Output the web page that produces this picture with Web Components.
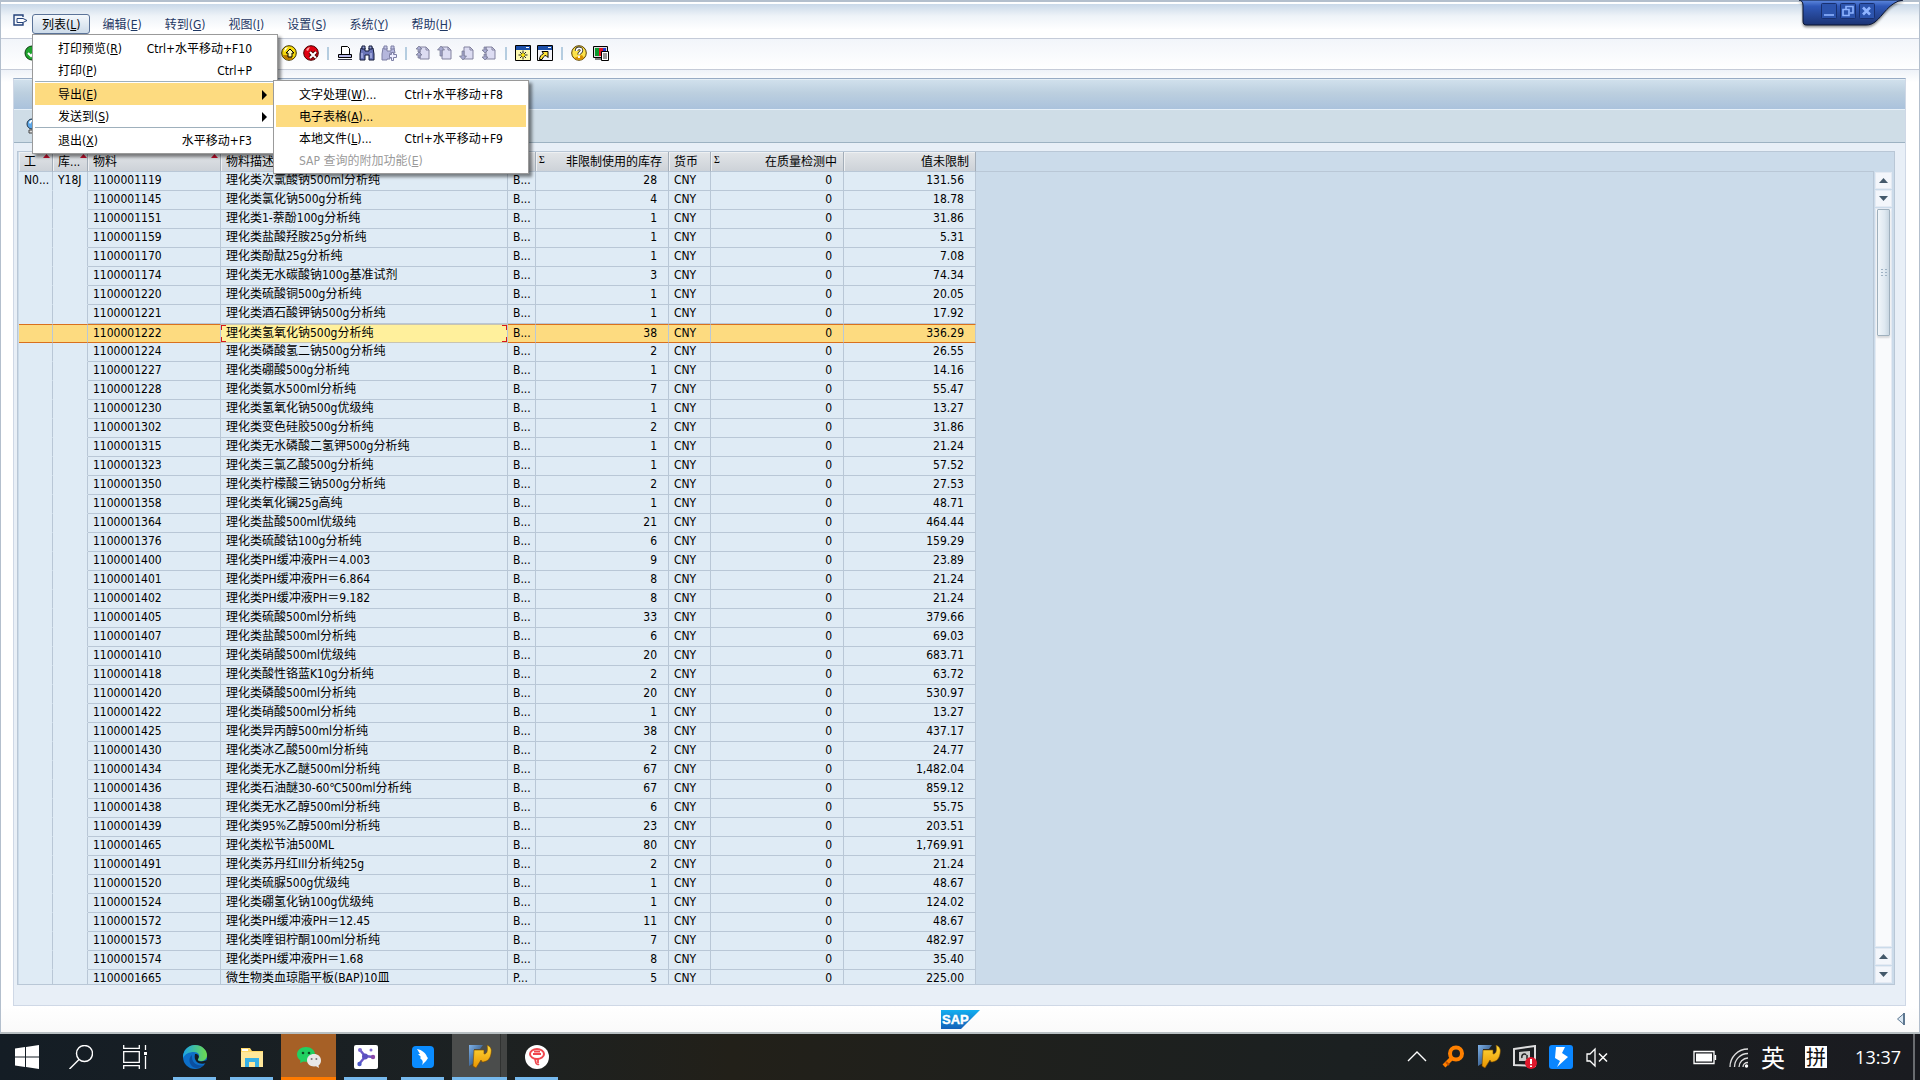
<!DOCTYPE html>
<html lang="zh-CN">
<head>
<meta charset="utf-8">
<title>SAP</title>
<style>
  :root {
    --ui-font: "DejaVu Sans Condensed", "Noto Sans", "Noto Sans CJK SC", sans-serif;
    --line: #b9c7d6;
    --select: #fddb80;
    --navy: #1f3864;
  }
  body {
    margin: 0;
    height: 100vh;
    display: flex;
    flex-direction: column;
    overflow: hidden;
    font: 12px/18px var(--ui-font);
    color: #000;
  }
  sap-window { flex: 1; min-height: 0; }
</style>
</head>
<body>
  <sap-window>
    <sap-menubar slot="menu">
      <menu-title open>列表(<u>L</u>)
        <menu-popup slot="popup">
          <menu-item keys="Ctrl+水平移动+F10">打印预览(<u>R</u>)</menu-item>
          <menu-item keys="Ctrl+P">打印(<u>P</u>)</menu-item>
          <menu-line></menu-line>
          <menu-item active more>导出(<u>E</u>)
            <menu-popup slot="sub">
              <menu-item keys="Ctrl+水平移动+F8">文字处理(<u>W</u>)...</menu-item>
              <menu-item active>电子表格(<u>A</u>)...</menu-item>
              <menu-item keys="Ctrl+水平移动+F9">本地文件(<u>L</u>)...</menu-item>
              <menu-item disabled>SAP 查询的附加功能(<u>E</u>)</menu-item>
            </menu-popup>
          </menu-item>
          <menu-item more>发送到(<u>S</u>)</menu-item>
          <menu-line></menu-line>
          <menu-item keys="水平移动+F3">退出(<u>X</u>)</menu-item>
        </menu-popup>
      </menu-title>
      <menu-title>编辑(<u>E</u>)</menu-title>
      <menu-title>转到(<u>G</u>)</menu-title>
      <menu-title>视图(<u>I</u>)</menu-title>
      <menu-title>设置(<u>S</u>)</menu-title>
      <menu-title>系统(<u>Y</u>)</menu-title>
      <menu-title>帮助(<u>H</u>)</menu-title>
    </sap-menubar>
    <sap-toolbar slot="toolbar"></sap-toolbar>
    <alv-grid></alv-grid>
    <sap-status slot="status"></sap-status>
  </sap-window>
  <win-taskbar></win-taskbar>

<script>
const page = (extra) => `<path d="M5 2h6l3 3v9H5z" fill="#dcdcf2" stroke="#82829f"/><path d="M11 2v3h3" fill="none" stroke="#82829f"/>${extra}`;

// 16px toolbar glyphs
const TOOL_ICONS = {
  enter: `<circle cx="8" cy="8" r="7" fill="#1fa32e" stroke="#0b3d10"/><path d="M4 8l3 3 5-6" fill="none" stroke="#fff" stroke-width="2"/>`,
  up: `<circle cx="8" cy="8" r="7.3" fill="#f5d90a" stroke="#3c3000"/><path d="M2 10a6.500 6.500 0 0 0 10 4l-3-4z" fill="#b97a00"/><path d="M4 3l3-1-4 5z" fill="#fff"/><path d="M9 4l4 4h-2v4H7V8H5z" fill="#fff7a8" stroke="#000"/>`,
  cancel: `<circle cx="8" cy="8" r="7.3" fill="#e00010" stroke="#400"/><path d="M3 5a5 5 0 0 1 4-3L5 6z" fill="#ff9d9d"/><path d="M7 7l6 6M13 7l-6 6" stroke="#500" stroke-width="4"/><path d="M7 7l6 6M13 7l-6 6" stroke="#fff" stroke-width="2"/>`,
  print: `<path d="M4.500 1.500h6l2 2v6h-8z" fill="#fff" stroke="#000"/><path d="M1.500 9.500h13v3h-13z" fill="#b8b8e8" stroke="#000"/><path d="M1 14.500h14" stroke="#334" stroke-width="1"/>`,
  find: `<path d="M2 3h4v3h4V3h4l1 6v6h-5v-5H6v5H1V9z" fill="#6a74b8" stroke="#101838"/><path d="M3 1h3v3H3zM10 1h3v3h-3z" fill="#9aa4dc" stroke="#101838"/><path d="M3 8v5M12 8v5" stroke="#c8d0f8"/>`,
  next: `<path d="M2 3h4v3h4V3h3l1 5H9v6H6v1H1V9z" fill="#b4b6dc" stroke="#7c7ea4"/><path d="M3 1h3v3H3zM10 1h3v3h-3z" fill="#c8caea" stroke="#7c7ea4"/><path d="M10.500 7.500h2v2h3v3h-3v3h-2v-3h-2v-3h2z" fill="#eef" stroke="#7c7ea4"/>`,
  first: page(`<path d="M4 1l3 3H5v3H3V4H1zM4 7l3 3H5v3H3v-3H1z" fill="#a8aad0" stroke="#70728c" stroke-width=".7"/>`),
  prev: page(`<path d="M4 1l3.500 4H5v6H3V5H.5z" fill="#a8aad0" stroke="#70728c" stroke-width=".7"/>`),
  pgdn: page(`<path d="M4 15l3.500-4H5V6H3v5H.5z" fill="#a8aad0" stroke="#70728c" stroke-width=".7"/>`),
  last: page(`<path d="M4 8L1 5h2V2h2v3h2zM4 15l-3-3h2V9h2v3h2z" fill="#a8aad0" stroke="#70728c" stroke-width=".7"/>`),
  session: `<path d="M.5 .5h15v15H.5z" fill="#fdf9b0" stroke="#000"/><path d="M1 1h14v4H1z" fill="#1c4fa8"/><path d="M11 2h3v1h-3z" fill="#fff"/><path d="M8 5.500v9M3.500 10h9M5 7l6 6M11 7l-6 6" stroke="#222"/><circle cx="8" cy="10" r="1.800" fill="#ffe800"/>`,
  shortcut: `<path d="M.5 .5h15v15H.5z" fill="#f4f4fa" stroke="#000"/><path d="M1 1h14v4H1z" fill="#1c4fa8"/><path d="M11 2h3v1h-3z" fill="#fff"/><path d="M5 6.500h6v6l-2-2c-2 0-3 2-4 4H2.500c0-3 2-5 4-6z" fill="#ffe23a" stroke="#000"/>`,
  help: `<circle cx="8" cy="8" r="7.300" fill="#fce24a" stroke="#5a4000"/><path d="M3 13a7 7 0 0 0 10 0l-2-3z" fill="#d89000"/><path d="M5.500 6c0-3.500 5-3.500 5-.5 0 2-2.500 2-2.500 4" fill="none" stroke="#222" stroke-width="3.400"/><path d="M5.500 6c0-3.500 5-3.500 5-.5 0 2-2.500 2-2.500 4M8 11v2" fill="none" stroke="#fff" stroke-width="1.800"/>`,
  layout: `<path d="M.5 1.500h14v11H.5z" fill="#ddd" stroke="#000"/><path d="M2 3h4v8H2z" fill="#0a9a2c"/><path d="M6 3h4v8H6z" fill="#e01020"/><path d="M10 3h3v8h-3z" fill="#2038d0"/><path d="M2 14h7" stroke="#000"/><path d="M8.500 6.500h7v9h-7z" fill="#fff" stroke="#000"/><path d="M10 9h4M10 11h4M10 13h4" stroke="#333"/>`
};

const SAP_GUI = `<defs><linearGradient id="g" x1="0" y1="0" x2="1" y2="1"><stop offset="0" stop-color="#7fb2e8"/><stop offset="1" stop-color="#0d2c56"/></linearGradient><linearGradient id="y" x1="0" y1="0" x2="0" y2="1"><stop offset="0" stop-color="#ffd93a"/><stop offset="1" stop-color="#e99400"/></linearGradient></defs>
  <path d="M1 0h14l-3 4H6v14l-5 3z" fill="url(#g)"/><path d="M6 5h10v4c3 0 4-3 3-9 4 2 5 4 4 9-1 6-5 8-9 8l-1-2-5 8-3-2z" fill="url(#y)" stroke="#7a4a00" stroke-width=".6"/>`;

// 24px taskbar and tray glyphs
const TASK_ICONS = {
  start: `<path d="M0 3.400l10-1.400v9.500H0zM11 1.900L24 0v11.500H11zM0 12.500h10V22L0 20.600zM11 12.500h13V24L11 22.100z" fill="#fff"/>`,
  search: `<circle cx="15.500" cy="8.500" r="8" fill="none" stroke="#fff" stroke-width="1.400"/><path d="M10 14.500L.5 24" stroke="#fff" stroke-width="1.400"/>`,
  view: `<path d="M.7 0v3.300h15.600V0M.7 24v-3.300h15.600V24M.7 6.700h15.600v10.600H.7zM22.500 0v5M22.500 11v13" fill="none" stroke="#fff" stroke-width="1.300"/><path d="M21 7h3v3h-3z" fill="#fff"/>`,
  edge: `<defs><linearGradient id="a" x1="0" y1="0" x2="1" y2="0"><stop offset="0" stop-color="#1aa5e8"/><stop offset="1" stop-color="#6edb4c"/></linearGradient></defs><circle cx="12" cy="12" r="12" fill="#0d6fc8"/><path d="M0 11C1 4 6 0 12 0c7 0 12 5 12 10 0 4-3 6-6 6-2 0-4-1-3-2 3-4 0-7-4-7C6 7 2 9 0 13z" fill="url(#a)"/><path d="M9 10c-4 3-3 9 1 12 3 2 8 1 11-2-6 2-13-2-12-10z" fill="#0b4fa0"/><path d="M12 9c3 0 5 2 3 5-1 2 2 3 6 2l3-1-1 3c-5 2-13 0-11-9z" fill="#151c20"/>`,
  folder: `<path d="M1 3h9l2 3h11v16H1z" fill="#ffd868"/><path d="M1 7h22v15H1z" fill="#ffe79a"/><path d="M2 4h6v2H2z" fill="#fff"/><path d="M5 22v-9h14v9h-4v-5H9v5z" fill="#38b1e6"/>`,
  wechat: `<path d="M9 2C4 2 0 5 0 9.500c0 2.500 1.500 4.500 3.500 6L3 18l3.500-1.500c1 .3 1.500.3 2.500.3 5 0 9-3 9-7.300S14 2 9 2z" fill="#20d061"/><circle cx="6" cy="8" r="1.300" fill="#0b4a22"/><circle cx="12" cy="8" r="1.300" fill="#0b4a22"/><path d="M17 9c-4 0-7 2.600-7 6.300s3 6.200 7 6.200l2-.2 3 1.700-.5-2.500c1.700-1.200 2.500-3 2.500-5C24 11.600 21 9 17 9z" fill="#e8e8e8"/><circle cx="14.600" cy="14" r="1" fill="#777"/><circle cx="19.400" cy="14" r="1" fill="#777"/>`,
  graph: `<rect width="24" height="24" rx="2" fill="#fff"/><path d="M6 5l5 6 8 1M11 12l-6 7" fill="none" stroke="#6a58c8" stroke-width="2.400"/><circle cx="11" cy="11.500" r="3" fill="#5a50c0"/><circle cx="6" cy="5" r="2" fill="#7a68d0"/><circle cx="19" cy="12" r="2.200" fill="#8a4aa8"/><circle cx="5.500" cy="19" r="2.200" fill="#4a58c8"/><circle cx="17" cy="5" r="1.500" fill="#7a68d0"/>`,
  bird: `<rect x="1" y="1" width="22" height="22" rx="4" fill="#0a8cff"/><path d="M6 4c5 1 9 4 10 8l1 1-2 3-4 4c1-2 1-4 0-5l-2-2 1-1-3-3 2 0z" fill="#fff"/>`,
  sap: SAP_GUI,
  red: `<circle cx="12" cy="12" r="12" fill="#fff"/><ellipse cx="12" cy="9" rx="7" ry="5" fill="none" stroke="#f0484e" stroke-width="2"/><path d="M8 9h8M10 14l1 4a2 2 0 0 0 3 1M13 13v5M9 6.500h6" fill="none" stroke="#f0484e" stroke-width="1.800"/>`,
  chevron: `<path d="M3 16l9-9 9 9" fill="none" stroke="#fff" stroke-width="1.400"/>`,
  key: `<circle cx="15" cy="8.500" r="6" fill="none" stroke="#ff8000" stroke-width="4"/><path d="M11 13l-8 8" stroke="#ff8000" stroke-width="4"/><path d="M5 17l3 3" stroke="#c05000" stroke-width="2"/>`,
  cam: `<path d="M1 4l21-3v20L1 20z" fill="none" stroke="#ddd" stroke-width="2"/><path d="M6 16V7l11-1v10z" fill="#ccc"/><path d="M9 13c-1-4 3-5 4-3M14 10v4" stroke="#222" stroke-width="1.500" fill="none"/><circle cx="18" cy="18" r="6" fill="#e0182c"/><path d="M18 14v5M18 20.500v1.500" stroke="#fff" stroke-width="2"/>`,
  bolt: `<rect width="24" height="24" rx="3" fill="#0a86ff"/><path d="M7 2l9 0-3 6 6 4L8 22l3-6-5-3z" fill="#fff"/>`,
  mute: `<path d="M2 9h3l5-5v17l-5-5H2z" fill="none" stroke="#fff" stroke-width="1.300"/><path d="M14 8.500l8 8M22 8.500l-8 8" stroke="#fff" stroke-width="1.500"/>`,
  battery: `<path d="M1 6.500h20v12H1zM22.500 10v5" fill="none" stroke="#fff" stroke-width="1.300"/><path d="M3 8.500h16v8H3z" fill="#fff"/>`,
  wifi: `<path d="M3 22C3 12 11 4 21 4M7.500 22C7.500 15 13 8.500 21 8.500M12 22c0-4.500 4-9 9-9M16 22c0-2.500 2-4.500 5-4.500" fill="none" stroke="#ddd" stroke-width="1.300"/><circle cx="19.500" cy="21" r="1.700" fill="#fff"/>`
};

const svg = (body, size, box = size) =>
  `<svg width="${size}" height="${size}" viewBox="0 0 ${box} ${box}" aria-hidden="true">${body}</svg>`;

class BaseElement extends HTMLElement {
  constructor() {
    super();
    this.attachShadow({ mode: "open" });
  }

  connectedCallback() {
    this.shadowRoot.innerHTML = this.render();
  }
}

class SapWindow extends BaseElement {
  render() {
    return `
      <style>
        :host {
          display: flex;
          flex-direction: column;
          border: 1px solid #b3bfcd;
          border-top-width: 2px;
          border-bottom: 2px solid #b8bfc2;
          background: #fff;
          box-sizing: border-box;
        }
        main {
          flex: 1;
          min-height: 0;
          display: flex;
          flex-direction: column;
          padding: 8px 13px 0 12px;
          background: linear-gradient(#eef2f8, #fff 12px);
        }
        .screen {
          flex: 1;
          min-height: 0;
          display: flex;
          flex-direction: column;
          background: #e8eff7;
          border: 1px solid #cfd8e6;
          border-top-color: #97abc4;
        }
        .title {
          height: 29px;
          border-top: 1px solid #e4eef6;
          border-bottom: 1px solid #e6f0f8;
          background: linear-gradient(#d0e0ec, #bccfdf 45%, #aac2dc);
        }
        .app-bar {
          height: 32px;
          display: flex;
          align-items: center;
          padding-left: 10px;
          background: #cfdde7;
          border-bottom: 1px solid #9db2c2;
        }
        button {
          display: flex;
          padding: 0;
          border: 0;
          background: none;
        }
        .body {
          flex: 1;
          min-height: 0;
          display: flex;
          padding: 8px 10px 20px 3px;
        }
        ::slotted(alv-grid) { flex: 1; min-width: 0; }
      </style>
      <slot name="menu"></slot>
      <slot name="toolbar"></slot>
      <main>
        <div class="screen">
          <div class="title"></div>
          <div class="app-bar">
            <button aria-label="明细">${svg(`<circle cx="8" cy="6" r="5" fill="#5aa6e8" stroke="#234"/><path d="M5 4l2-2h2L6 6z" fill="#fff"/><path d="M5 12h6v3H5z" fill="#ddd" stroke="#444"/>`, 16)}</button>
          </div>
          <div class="body"><slot></slot></div>
        </div>
      </main>
      <slot name="status"></slot>`;
  }
}

class SapMenubar extends BaseElement {
  render() {
    return `
      <style>
        :host {
          position: relative;
          z-index: 5;
          display: flex;
          align-items: flex-start;
          gap: 1px;
          height: 24px;
          padding: 12px 0 0 12px;
          border-bottom: 1px solid #c5cbd8;
          background: linear-gradient(#fff 2px, #c9d8e8 2px, #eef3f8 14px, #fff 28px);
          color: var(--navy);
        }
        .system {
          display: flex;
          width: 18px;
          padding: 0;
          border: 0;
          background: none;
        }
        /* window controls hang over the corner of the menu bar */
        .controls {
          position: absolute;
          top: -2px;
          right: 16px;
          display: block;
          filter: drop-shadow(0 2px 1px #0006);
        }
      </style>
      <button class="system" aria-label="系统菜单">${svg(`<path d="M10 3V1H1v10h9V9" fill="none" stroke="#24427a" stroke-width="1.400"/><path d="M4 4.500h6l4 2-4 2H4z" fill="#fff" stroke="#24427a"/>`, 16)}</button>
      <slot></slot>
      <svg class="controls" width="104" height="28" viewBox="0 0 104 28" role="img" aria-label="窗口控制">
        <defs><linearGradient id="b" x1="0" y1="0" x2="0" y2="1"><stop offset="0" stop-color="#5f8ae0"/><stop offset=".25" stop-color="#2f58b8"/><stop offset="1" stop-color="#1c3474"/></linearGradient></defs>
        <path d="M0 0h104C90 2 84 16 76 22c-3 2-5 3-9 3H8c-3 0-4-1-4-4V5C4 2 2 0 0 0z" fill="url(#b)" stroke="#0a1430"/>
        <g fill="#2c54ae" stroke="#183070"><rect x="22.500" y="3.500" width="15" height="15" rx="1"/><rect x="41.500" y="3.500" width="15" height="15" rx="1"/><rect x="60.500" y="3.500" width="15" height="15" rx="1"/></g>
        <g fill="none" stroke="#8fb4ff" stroke-width="1.600"><path d="M25 15h10"/><path d="M44 9.500h6v6h-6zM47 9V6.500h7V13h-3"/><path d="M64 7.500l7 7M71 7.500l-7 7" stroke-width="2.600"/></g>
      </svg>`;
  }
}

class MenuTitle extends BaseElement {
  render() {
    return `
      <style>
        :host { position: relative; display: block; }
        button {
          height: 20px;
          padding: 1px 10px 0;
          border: 1px solid transparent;
          border-radius: 3px;
          background: none;
          font: inherit;
          color: inherit;
          white-space: nowrap;
        }
        :host([open]) button {
          padding: 1px 9px 0;
          border-color: #5b7398;
          background: linear-gradient(#f4f8fc, #cddbe9);
          color: #000;
        }
        ::slotted(menu-popup) {
          position: absolute;
          top: 100%;
          left: 0;
          width: 240px;
        }
      </style>
      <button aria-haspopup="menu"><slot></slot></button>
      <slot name="popup"></slot>`;
  }
}

class MenuPopup extends BaseElement {
  render() {
    return `
      <style>
        :host {
          z-index: 10;
          display: block;
          padding: 2px;
          border: 1px solid #9a9a9a;
          background: #fff;
          color: #000;
          box-shadow: 3px 3px 3px #0007;
        }
      </style>
      <slot></slot>`;
  }
}

class MenuItem extends BaseElement {
  render() {
    const keys = this.getAttribute("keys") || "";
    const arrow = this.hasAttribute("more")
      ? `<svg class="arrow" width="5" height="10" viewBox="0 0 5 10"><path d="M0 0l5 5-5 5z"/></svg>` : "";
    return `
      <style>
        :host { position: relative; display: block; }
        button {
          display: flex;
          align-items: center;
          justify-content: space-between;
          width: 100%;
          height: 22px;
          padding: 2px 23px 0;
          border: 0;
          background: none;
          font: inherit;
          color: inherit;
          white-space: nowrap;
        }
        :host([more]) button { padding-right: 8px; }
        :host([active]) > button, button:hover { background: var(--select); }
        button:disabled { color: #9a9a9a; background: none; }
        ::slotted(menu-popup) {
          position: absolute;
          top: -3px;
          left: calc(100% - 2px);
          width: 250px;
        }
      </style>
      <button role="menuitem"${this.hasAttribute("disabled") ? " disabled" : ""}>
        <span><slot></slot></span><span>${keys}</span>${arrow}
      </button>
      <slot name="sub"></slot>`;
  }
}

class MenuLine extends BaseElement {
  render() {
    return `<style>:host { display: block; height: 1px; margin-bottom: 1px; background: #9fb0bc; }</style>`;
  }
}

class SapToolbar extends BaseElement {
  render() {
    const groups = [
      [["up", "退出"], ["cancel", "取消"]],
      [["print", "打印"], ["find", "查找"], ["next", "继续查找"]],
      [["first", "第一页"], ["prev", "上一页"], ["pgdn", "下一页"], ["last", "最后一页"]],
      [["session", "新建会话"], ["shortcut", "生成快捷方式"]],
      [["help", "帮助"], ["layout", "自定义布局"]]
    ];
    const button = ([icon, label]) => `<button aria-label="${label}">${svg(TOOL_ICONS[icon], 16)}</button>`;
    return `
      <style>
        :host {
          display: flex;
          align-items: center;
          gap: 6px;
          height: 28px;
          padding: 0 0 2px 23px;
          border-bottom: 1px solid #c5cbd8;
          background: linear-gradient(#f2f5fa, #fff);
        }
        button { display: flex; padding: 0; border: 0; background: none; }
        input { width: 229px; height: 20px; box-sizing: border-box; border: 1px solid #a4b4c8; }
        i { width: 2px; height: 13px; margin: 0 2px; background: #b5cde0; }
      </style>
      ${button(["enter", "回车"])}
      <input type="text" aria-label="命令">
      ${groups.map((g) => g.map(button).join("")).join("<i></i>")}`;
  }
}

// 物料, 物料描述, 库存, 金额
const ROWS = [
  ["1100001119", "理化类次氯酸钠500ml分析纯", "28", "131.56"],
  ["1100001145", "理化类氯化钠500g分析纯", "4", "18.78"],
  ["1100001151", "理化类1-萘酚100g分析纯", "1", "31.86"],
  ["1100001159", "理化类盐酸羟胺25g分析纯", "1", "5.31"],
  ["1100001170", "理化类酚酞25g分析纯", "1", "7.08"],
  ["1100001174", "理化类无水碳酸钠100g基准试剂", "3", "74.34"],
  ["1100001220", "理化类硫酸铜500g分析纯", "1", "20.05"],
  ["1100001221", "理化类酒石酸钾钠500g分析纯", "1", "17.92"],
  ["1100001222", "理化类氢氧化钠500g分析纯", "38", "336.29"],
  ["1100001224", "理化类磷酸氢二钠500g分析纯", "2", "26.55"],
  ["1100001227", "理化类硼酸500g分析纯", "1", "14.16"],
  ["1100001228", "理化类氨水500ml分析纯", "7", "55.47"],
  ["1100001230", "理化类氢氧化钠500g优级纯", "1", "13.27"],
  ["1100001302", "理化类变色硅胶500g分析纯", "2", "31.86"],
  ["1100001315", "理化类无水磷酸二氢钾500g分析纯", "1", "21.24"],
  ["1100001323", "理化类三氯乙酸500g分析纯", "1", "57.52"],
  ["1100001350", "理化类柠檬酸三钠500g分析纯", "2", "27.53"],
  ["1100001358", "理化类氧化镧25g高纯", "1", "48.71"],
  ["1100001364", "理化类盐酸500ml优级纯", "21", "464.44"],
  ["1100001376", "理化类硫酸钴100g分析纯", "6", "159.29"],
  ["1100001400", "理化类PH缓冲液PH＝4.003", "9", "23.89"],
  ["1100001401", "理化类PH缓冲液PH＝6.864", "8", "21.24"],
  ["1100001402", "理化类PH缓冲液PH＝9.182", "8", "21.24"],
  ["1100001405", "理化类硫酸500ml分析纯", "33", "379.66"],
  ["1100001407", "理化类盐酸500ml分析纯", "6", "69.03"],
  ["1100001410", "理化类硝酸500ml优级纯", "20", "683.71"],
  ["1100001418", "理化类酸性铬蓝K10g分析纯", "2", "63.72"],
  ["1100001420", "理化类磷酸500ml分析纯", "20", "530.97"],
  ["1100001422", "理化类硝酸500ml分析纯", "1", "13.27"],
  ["1100001425", "理化类异丙醇500ml分析纯", "38", "437.17"],
  ["1100001430", "理化类冰乙酸500ml分析纯", "2", "24.77"],
  ["1100001434", "理化类无水乙醚500ml分析纯", "67", "1,482.04"],
  ["1100001436", "理化类石油醚30-60℃500ml分析纯", "67", "859.12"],
  ["1100001438", "理化类无水乙醇500ml分析纯", "6", "55.75"],
  ["1100001439", "理化类95%乙醇500ml分析纯", "23", "203.51"],
  ["1100001465", "理化类松节油500ML", "80", "1,769.91"],
  ["1100001491", "理化类苏丹红III分析纯25g", "2", "21.24"],
  ["1100001520", "理化类硫脲500g优级纯", "1", "48.67"],
  ["1100001524", "理化类硼氢化钠100g优级纯", "1", "124.02"],
  ["1100001572", "理化类PH缓冲液PH＝12.45", "11", "48.67"],
  ["1100001573", "理化类喹钼柠酮100ml分析纯", "7", "482.97"],
  ["1100001574", "理化类PH缓冲液PH＝1.68", "8", "35.40"],
  ["1100001665", "微生物类血琼脂平板(BAP)10皿", "5", "225.00", "P..."]
];

class AlvGrid extends BaseElement {
  connectedCallback() {
    super.connectedCallback();
    this.shadowRoot.querySelector("tbody").addEventListener("click", (e) => {
      const row = e.target.closest("tr");
      this.shadowRoot.querySelector("tr.on").classList.remove("on");
      row.classList.add("on");
    });
  }

  row([id, name, stock, value, unit = "B..."], i) {
    return `<tr${id === "1100001222" ? ' class="on"' : ""}>
      <td>${i ? "" : "N0..."}</td><td>${i ? "" : "Y18J"}</td><td>${id}</td><td>${name}</td><td>${unit}</td>
      <td class="n">${stock}</td><td>CNY</td><td class="n">0</td><td class="n">${value}</td></tr>`;
  }

  render() {
    return `
      <style>
        :host {
          display: flex;
          overflow: hidden;
          border: 1px solid var(--line);
          background: #cbdbea;
        }
        .view {
          flex: 1;
          min-width: 0;
          display: flex;
          align-items: flex-start;
          overflow: hidden;
        }
        .rest { flex: 1; height: 19px; border-bottom: 1px solid var(--line); }
        table {
          width: 958px;
          table-layout: fixed;
          border-collapse: separate;
          border-spacing: 0;
          border-left: 1px solid #cbdbea;
        }
        th, td {
          box-sizing: border-box;
          padding: 0 0 0 5px;
          border-right: 1px solid var(--line);
          border-bottom: 1px solid var(--line);
          font-weight: normal;
          text-align: left;
          white-space: nowrap;
          overflow: hidden;
        }
        th {
          height: 20px;
          padding-top: 1px;
          line-height: 18px;
          border-right-color: #a3adb8;
          background: linear-gradient(#e2e5e8, #cdd2d8);
          box-shadow: inset 1px 1px #eef0f2;
        }
        th.n, td.n { text-align: right; }
        th.n { padding-right: 6px; }
        td.n { padding-right: 11px; }
        th div { display: flex; justify-content: space-between; align-items: flex-start; height: 18px; }
        th svg { flex: none; margin: 1px 2px 0 0; }
        th.sum { padding-left: 3px; }
        th small { font: 10px/14px "Liberation Serif", serif; }
        td {
          height: 19px;
          line-height: 16px;
          padding-bottom: 2px;
          background: #dfebf5;
        }
        td:nth-child(-n+2) { border-bottom-color: #dfebf5; }
        .on td {
          padding-bottom: 1px;
          border-top: 1px solid #d9701e;
          border-bottom-color: #d9701e;
          background: var(--select);
        }
        /* the focused cell keeps red marks in its corners */
        .on td:nth-child(4) {
          border-top-color: #c9c4b0;
          border-bottom-color: #c9c4b0;
          background:
            linear-gradient(#d81818, #d81818) 0 0 / 5px 1px,
            linear-gradient(#d81818, #d81818) 0 0 / 1px 5px,
            linear-gradient(#d81818, #d81818) 100% 0 / 5px 1px,
            linear-gradient(#d81818, #d81818) 100% 0 / 1px 5px,
            linear-gradient(#d81818, #d81818) 0 100% / 5px 1px,
            linear-gradient(#d81818, #d81818) 0 100% / 1px 5px,
            linear-gradient(#d81818, #d81818) 100% 100% / 5px 1px,
            linear-gradient(#d81818, #d81818) 100% 100% / 1px 5px,
            #fff09c;
          background-repeat: no-repeat;
        }
      </style>
      <div class="view">
        <table>
          <colgroup>
            <col style="width: 34px"><col style="width: 35px"><col style="width: 133px">
            <col style="width: 287px"><col style="width: 28px"><col style="width: 133px">
            <col style="width: 42px"><col style="width: 133px"><col>
          </colgroup>
          <thead><tr>
            ${["工", "库...", "物料"].map((t) => `<th><div>${t}<svg width="7" height="4"><path d="M0 4L3.500 0 7 4z" fill="#c8102e"/></svg></div></th>`).join("")}
            <th>物料描述</th><th></th>
            <th class="n sum"><div><small>Σ</small>非限制使用的库存</div></th><th>货币</th>
            <th class="n sum"><div><small>Σ</small>在质量检测中</div></th><th class="n">值未限制</th>
          </tr></thead>
          <tbody>${ROWS.map(this.row).join("")}</tbody>
        </table>
        <div class="rest"></div>
      </div>
      <scroll-bar></scroll-bar>`;
  }
}

class ScrollBar extends BaseElement {
  render() {
    const up = `<svg width="9" height="5"><path d="M0 5l4.500-5L9 5z" fill="#44596b"/></svg>`;
    const down = `<svg width="9" height="5"><path d="M0 0l4.500 5L9 0z" fill="#44596b"/></svg>`;
    return `
      <style>
        :host {
          flex: none;
          display: flex;
          flex-direction: column;
          margin-top: 19px;
          padding: 1px 2px 0 1px;
          width: 17px;
          border-left: 1px solid var(--line);
        }
        button {
          display: flex;
          align-items: center;
          justify-content: center;
          height: 17px;
          margin-bottom: 1px;
          padding: 0;
          border: 1px solid #e4eaf3;
          background: #f3f6fb;
        }
        .track { flex: 1; padding: 0 1px; background: #f9fafc; border: 1px solid #e4eaf3; }
        .thumb {
          display: flex;
          align-items: center;
          justify-content: center;
          height: 17%;
          border: 1px solid #9fb0bd;
          border-radius: 1px;
          background: linear-gradient(90deg, #f0f5f9, #dfe9f1 60%, #c9d7e2);
          box-shadow: 0 2px 2px #0002;
        }
        .track + button { margin-top: 1px; }
      </style>
      <button aria-label="首行">${up}</button>
      <button aria-label="向下">${down}</button>
      <div class="track"><div class="thumb"><svg width="6" height="8"><path d="M0 .5h2M4 .5h2M0 3.500h2M4 3.500h2M0 6.500h2M4 6.500h2" stroke="#9fb3c4"/></svg></div></div>
      <button aria-label="向上">${up}</button>
      <button aria-label="末行">${down}</button>`;
  }
}

class SapStatus extends BaseElement {
  render() {
    return `
      <style>
        :host {
          display: grid;
          grid-template-columns: 1fr auto 1fr;
          align-items: center;
          height: 26px;
          padding: 0 14px;
          background: linear-gradient(#fff, #fafafa);
        }
        .logo { grid-column: 2; display: block; }
        button { justify-self: end; display: flex; padding: 0; border: 0; background: none; }
      </style>
      <svg class="logo" width="39" height="19" viewBox="0 0 39 19">
        <defs><linearGradient id="s" x1="0" y1="0" x2="0" y2="1"><stop offset="0" stop-color="#12aef0"/><stop offset="1" stop-color="#1460b8"/></linearGradient></defs>
        <path d="M0 0h39L20 19H0z" fill="url(#s)"/>
        <text x="1" y="14" font-family="Liberation Sans" font-weight="bold" font-size="13" fill="#fff" stroke="#fff" stroke-width=".4">SAP</text>
      </svg>
      <button aria-label="展开状态栏"><svg width="8" height="12"><path d="M7 .5v11L.5 6z" fill="#dbe8f3" stroke="#5e7891"/><path d="M7 0v12" stroke="#5e7891" stroke-width="2"/></svg></button>`;
  }
}

class TaskButton extends BaseElement {
  render() {
    return `
      <style>
        :host { display: flex; width: 54px; }
        button {
          flex: 1;
          display: flex;
          align-items: center;
          justify-content: center;
          padding: 0;
          border: 0;
          background: none;
        }
        :host([running]) { width: 55px; margin-right: 2px; }
        :host([running]) button {
          padding-top: 3px;
          border-bottom: 3px solid #76b9ed;
          margin: 0 6px;
        }
        :host([alert]) button { margin: 0; background: #a66026; border-color: #ff7a00; }
        :host([current]) button {
          margin: 0;
          background: linear-gradient(90deg, #4b4d4c 48px, #303231 48px, #303231 49px, #434544 49px);
        }
      </style>
      <button aria-label="${this.getAttribute("label")}">${svg(TASK_ICONS[this.getAttribute("icon")], 24)}</button>`;
  }
}

class WinTaskbar extends BaseElement {
  render() {
    const tray = (icon, label) => `<button aria-label="${label}">${svg(TASK_ICONS[icon], 24)}</button>`;
    return `
      <style>
        :host {
          flex: none;
          display: flex;
          height: 46px;
          background: linear-gradient(90deg, #141d25, #1c2122 25%, #222019 38%, #1b2021 70%, #1a1b20);
          color: #fff;
        }
        .pinned { display: flex; margin-right: 5px; }
        .apps { display: flex; flex: 1; }
        .tray { display: flex; align-items: center; gap: 12px; }
        .system { display: flex; align-items: center; gap: 10px; margin-left: 84px; }
        button { display: flex; align-items: center; padding: 0; border: 0; background: none; color: inherit; }
        .lang { font: 24px/24px "Noto Sans CJK SC", sans-serif; }
        .pinyin {
          width: 22px;
          height: 22px;
          margin: 0 18px 0 10px;
          justify-content: center;
          background: #fff;
          color: #111;
          font: 20px/22px "Noto Sans CJK SC", sans-serif;
        }
        .clock { margin-right: 12px; font: 18px/24px "Open Sans", sans-serif; }
        .desktop { width: 7px; border-left: 2px solid #6a6c70; }
      </style>
      <div class="pinned">
        <task-button icon="start" label="开始"></task-button>
        <task-button icon="search" label="搜索"></task-button>
        <task-button icon="view" label="任务视图"></task-button>
      </div>
      <div class="apps">
        <task-button running icon="edge" label="Edge"></task-button>
        <task-button running icon="folder" label="文件资源管理器"></task-button>
        <task-button running alert icon="wechat" label="微信"></task-button>
        <task-button running icon="graph" label="图谱"></task-button>
        <task-button running icon="bird" label="钉钉"></task-button>
        <task-button running current icon="sap" label="SAP Logon"></task-button>
        <task-button running icon="red" label="截图"></task-button>
      </div>
      <div class="tray">
        ${tray("chevron", "显示隐藏的图标")}${tray("key", "密钥")}${tray("sap", "SAP")}
        ${tray("cam", "安全")}${tray("bolt", "闪电")}${tray("mute", "音量")}
      </div>
      <div class="system">
        ${tray("battery", "电池")}${tray("wifi", "网络")}
        <button class="lang">英</button>
        <button class="pinyin">拼</button>
        <time class="clock">13:37</time>
      </div>
      <button class="desktop" aria-label="显示桌面"></button>`;
  }
}

customElements.define("sap-window", SapWindow);
customElements.define("sap-menubar", SapMenubar);
customElements.define("menu-title", MenuTitle);
customElements.define("menu-popup", MenuPopup);
customElements.define("menu-item", MenuItem);
customElements.define("menu-line", MenuLine);
customElements.define("sap-toolbar", SapToolbar);
customElements.define("alv-grid", AlvGrid);
customElements.define("scroll-bar", ScrollBar);
customElements.define("sap-status", SapStatus);
customElements.define("task-button", TaskButton);
customElements.define("win-taskbar", WinTaskbar);
</script>
</body>
</html>
